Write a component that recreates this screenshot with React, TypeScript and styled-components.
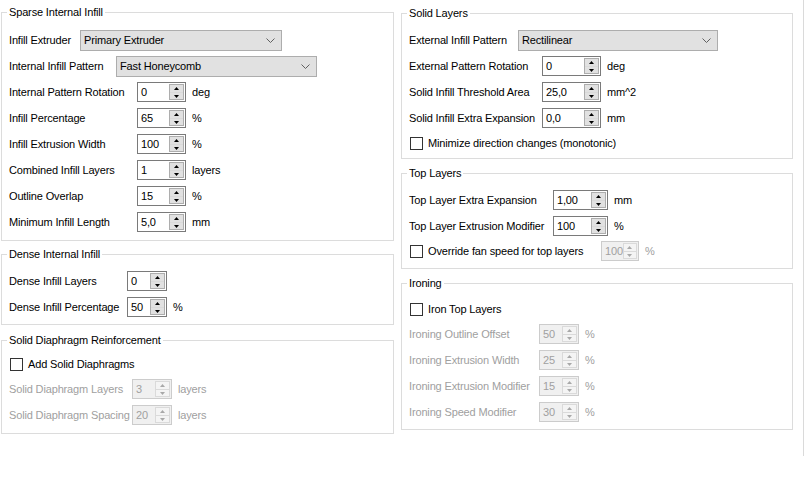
import React from "react";
import styled, { createGlobalStyle } from "styled-components";

const GlobalStyle = createGlobalStyle`
  html, body {
    margin: 0;
    background: #ffffff;
  }
  body {
    font-family: "Liberation Sans", Arial, sans-serif;
    font-size: 11px;
    letter-spacing: -0.15px;
    color: #000000;
  }
`;

const Page = styled.div`
  display: flex;
  align-items: flex-start;
  gap: 7px;
  box-sizing: border-box;
  width: 804px;
  height: 456px;
  padding-left: 1px;
  border-right: 1px solid #dadada;
`;

const Column = styled.div<{ $w: number; $pt: number }>`
  display: flex;
  flex-direction: column;
  width: ${(p) => p.$w}px;
  padding-top: ${(p) => p.$pt}px;
`;

const Group = styled.fieldset<{ $mt?: number; $pt: number; $pb: number }>`
  margin: ${(p) => p.$mt ?? 0}px 0 0;
  padding: ${(p) => p.$pt}px 7px ${(p) => p.$pb}px;
  border: 1px solid #dcdcdc;
  min-width: 0;
`;

const Title = styled.legend`
  margin-left: -2px;
  padding: 0 2px;
  line-height: 14px;
`;

const Row = styled.div<{ $h?: number }>`
  display: flex;
  align-items: center;
  height: ${(p) => p.$h ?? 26}px;
`;

const Label = styled.span<{ $w: number; $off?: boolean }>`
  flex: none;
  width: ${(p) => p.$w}px;
  white-space: nowrap;
  color: ${(p) => (p.$off ? "#a0a0a0" : "#000000")};
`;

const Unit = styled.span<{ $off?: boolean }>`
  margin-left: 6px;
  color: ${(p) => (p.$off ? "#a0a0a0" : "#000000")};
`;

const Combo = styled.div<{ $w: number }>`
  display: flex;
  align-items: center;
  justify-content: space-between;
  box-sizing: border-box;
  width: ${(p) => p.$w}px;
  height: 21px;
  padding: 0 6px 0 3px;
  border: 1px solid #adadad;
  background: #e1e1e1;
`;

const SpinFrame = styled.div<{ $w: number; $off?: boolean }>`
  display: flex;
  align-items: center;
  box-sizing: border-box;
  width: ${(p) => p.$w}px;
  height: 20px;
  padding: 1px;
  border: 1px solid ${(p) => (p.$off ? "#cccccc" : "#7a7a7a")};
  background: ${(p) => (p.$off ? "#f0f0f0" : "#ffffff")};
`;

const SpinText = styled.span<{ $off?: boolean }>`
  flex: 1;
  padding-left: 2px;
  color: ${(p) => (p.$off ? "#a0a0a0" : "#000000")};
`;

const SpinButtons = styled.div<{ $off?: boolean }>`
  display: grid;
  grid-template-rows: 1fr 1fr;
  box-sizing: border-box;
  width: 15px;
  height: 16px;
  border: 1px solid ${(p) => (p.$off ? "#dadada" : "#adadad")};
  background: ${(p) => (p.$off ? "#f4f4f4" : "#e1e1e1")};
`;

const SpinHalf = styled.div<{ $off?: boolean }>`
  display: flex;
  align-items: center;
  justify-content: center;
  & + & {
    border-top: 1px solid ${(p) => (p.$off ? "#dadada" : "#adadad")};
  }
`;

const CheckLabel = styled.label<{ $w?: number }>`
  display: flex;
  align-items: center;
  flex: none;
  width: ${(p) => (p.$w ? `${p.$w}px` : "auto")};
`;

const Box = styled.span`
  box-sizing: border-box;
  width: 13px;
  height: 13px;
  margin: 0 5px 0 1px;
  border: 1px solid #333333;
  background: #ffffff;
`;

const Chevron = () => (
  <svg width="9" height="5" viewBox="0 0 9 5">
    <path d="M0.5 0.5 L4.5 4.5 L8.5 0.5" fill="none" stroke="#606060" strokeWidth="1" />
  </svg>
);

const Arrow = ({ up, off }: { up?: boolean; off?: boolean }) => (
  <svg width="5" height="3" viewBox="0 0 5 3">
    <path d={up ? "M0 3 L2.5 0 L5 3Z" : "M0 0 L2.5 3 L5 0Z"} fill={off ? "#a8a8a8" : "#000000"} />
  </svg>
);

type SpinProps = { value: string; w: number; off?: boolean };

const Spin = ({ value, w, off }: SpinProps) => (
  <SpinFrame $w={w} $off={off}>
    <SpinText $off={off}>{value}</SpinText>
    <SpinButtons $off={off}>
      <SpinHalf $off={off}>
        <Arrow up off={off} />
      </SpinHalf>
      <SpinHalf $off={off}>
        <Arrow off={off} />
      </SpinHalf>
    </SpinButtons>
  </SpinFrame>
);

type FieldProps = {
  label: string;
  labelW: number;
  value: string;
  spinW: number;
  unit?: string;
  off?: boolean;
};

// label column + spin box + optional unit
const Field = ({ label, labelW, value, spinW, unit, off }: FieldProps) => (
  <Row>
    <Label $w={labelW} $off={off}>
      {label}
    </Label>
    <Spin value={value} w={spinW} off={off} />
    {unit && <Unit $off={off}>{unit}</Unit>}
  </Row>
);

const Choice = ({ label, labelW, value, w }: { label: string; labelW: number; value: string; w: number }) => (
  <Row>
    <Label $w={labelW}>{label}</Label>
    <Combo $w={w}>
      <span>{value}</span>
      <Chevron />
    </Combo>
  </Row>
);

const Check = ({ label, w }: { label: string; w?: number }) => (
  <CheckLabel $w={w}>
    <Box />
    {label}
  </CheckLabel>
);

export default function App() {
  return (
    <>
      <GlobalStyle />
      <Page>
        <Column $w={393} $pt={5}>
          <Group $pt={8} $pb={5}>
            <Title>Sparse Internal Infill</Title>
            <Choice label="Infill Extruder" labelW={71} value="Primary Extruder" w={202} />
            <Choice label="Internal Infill Pattern" labelW={107} value="Fast Honeycomb" w={201} />
            <Field label="Internal Pattern Rotation" labelW={128} value="0" spinW={49} unit="deg" />
            <Field label="Infill Percentage" labelW={128} value="65" spinW={49} unit="%" />
            <Field label="Infill Extrusion Width" labelW={128} value="100" spinW={49} unit="%" />
            <Field label="Combined Infill Layers" labelW={128} value="1" spinW={49} unit="layers" />
            <Field label="Outline Overlap" labelW={128} value="15" spinW={49} unit="%" />
            <Field label="Minimum Infill Length" labelW={128} value="5,0" spinW={49} unit="mm" />
          </Group>

          <Group $mt={6} $pt={7} $pb={4}>
            <Title>Dense Internal Infill</Title>
            <Field label="Dense Infill Layers" labelW={118} value="0" spinW={40} />
            <Field label="Dense Infill Percentage" labelW={118} value="50" spinW={40} unit="%" />
          </Group>

          <Group $mt={8} $pt={5} $pb={5}>
            <Title>Solid Diaphragm Reinforcement</Title>
            <Row $h={24}>
              <Check label="Add Solid Diaphragms" />
            </Row>
            <Field label="Solid Diaphragm Layers" labelW={123} value="3" spinW={40} unit="layers" off />
            <Field label="Solid Diaphragm Spacing" labelW={123} value="20" spinW={40} unit="layers" off />
          </Group>
        </Column>

        <Column $w={392} $pt={6}>
          <Group $pt={7} $pb={3}>
            <Title>Solid Layers</Title>
            <Choice label="External Infill Pattern" labelW={109} value="Rectilinear" w={200} />
            <Field label="External Pattern Rotation" labelW={133} value="0" spinW={59} unit="deg" />
            <Field label="Solid Infill Threshold Area" labelW={133} value="25,0" spinW={59} unit="mm^2" />
            <Field label="Solid Infill Extra Expansion" labelW={133} value="0,0" spinW={59} unit="mm" />
            <Row $h={24}>
              <Check label="Minimize direction changes (monotonic)" />
            </Row>
          </Group>

          <Group $mt={7} $pt={7} $pb={5}>
            <Title>Top Layers</Title>
            <Field label="Top Layer Extra Expansion" labelW={144} value="1,00" spinW={55} unit="mm" />
            <Field label="Top Layer Extrusion Modifier" labelW={144} value="100" spinW={55} unit="%" />
            <Row $h={24}>
              <Check label="Override fan speed for top layers" w={192} />
              <Spin value="100" w={38} off />
              <Unit $off>%</Unit>
            </Row>
          </Group>

          <Group $mt={7} $pt={7} $pb={4}>
            <Title>Ironing</Title>
            <Row $h={24}>
              <Check label="Iron Top Layers" />
            </Row>
            <Field label="Ironing Outline Offset" labelW={130} value="50" spinW={40} unit="%" off />
            <Field label="Ironing Extrusion Width" labelW={130} value="25" spinW={40} unit="%" off />
            <Field label="Ironing Extrusion Modifier" labelW={130} value="15" spinW={40} unit="%" off />
            <Field label="Ironing Speed Modifier" labelW={130} value="30" spinW={40} unit="%" off />
          </Group>
        </Column>
      </Page>
    </>
  );
}
